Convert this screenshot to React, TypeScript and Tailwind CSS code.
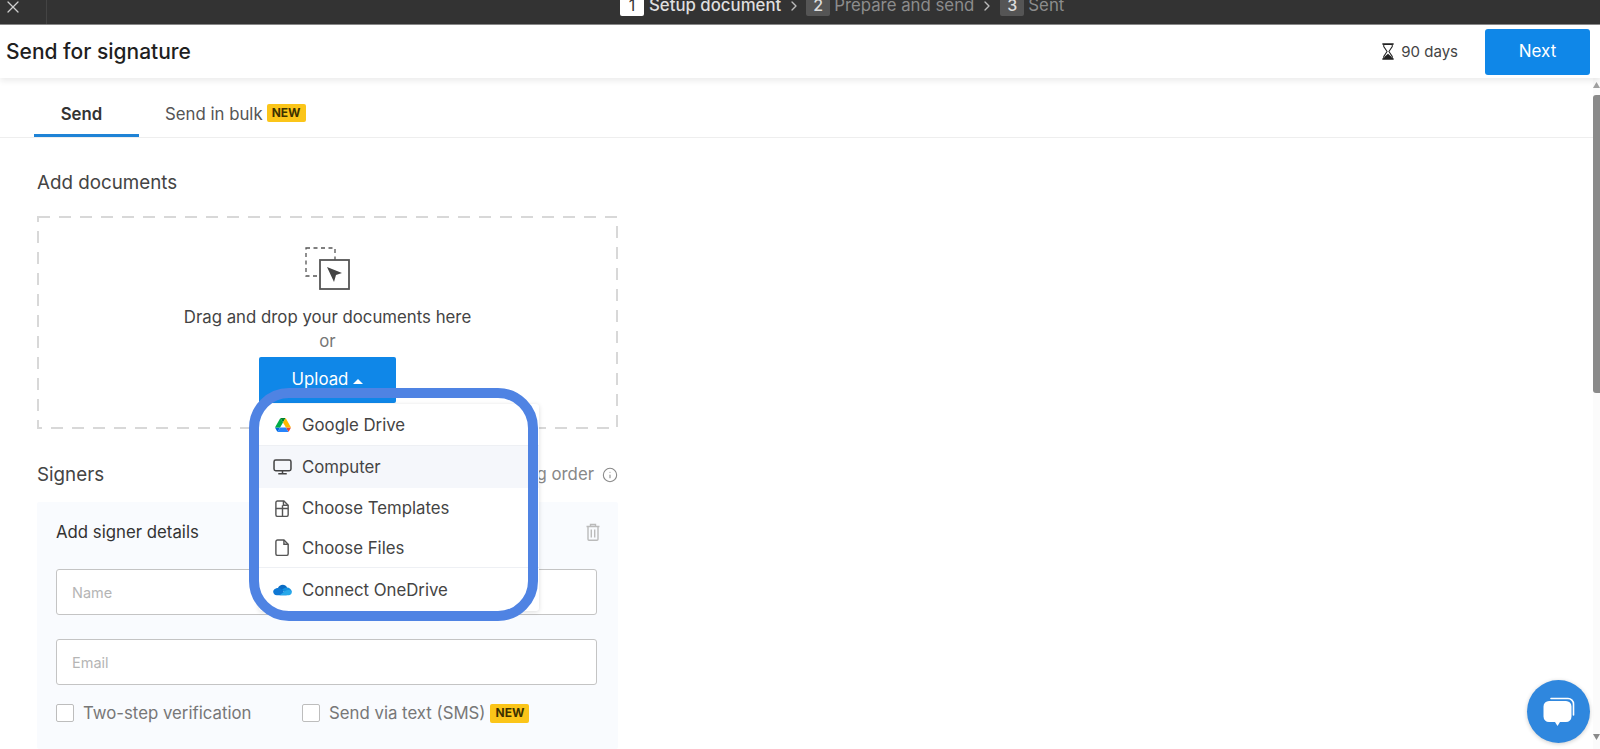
import React from "react";
import { ChevronRight, X, Info } from "lucide-react";

function NewBadge({ className }: { className: string }) {
  return (
    <span className={`inline-flex items-center justify-center rounded-[2px] bg-[#fbc519] text-[12px] font-bold text-[#3d3200] ${className}`}>
      NEW
    </span>
  );
}

function Step({ n, label, active }: { n: string; label: string; active?: boolean }) {
  return (
    <div className="flex items-center">
      <span
        className={
          active
            ? "flex h-[24px] w-[24px] items-center justify-center rounded-[2px] bg-white pt-[2px] text-[16px] text-[#333]"
            : "flex h-[24px] w-[24px] items-center justify-center rounded-[2px] bg-[#555] pt-[2px] text-[16px] font-medium text-[#ddd]"
        }
      >
        {n}
      </span>
      <span className={active ? "ml-[5px] mt-[3px] text-[16.8px] font-medium text-[#dedede]" : "ml-[4px] mt-[3px] text-[16.8px] text-[#8c8c8c]"}>{label}</span>
    </div>
  );
}

function DriveIcon() {
  return (
    <svg viewBox="0 0 87.3 78" className="h-[14px] w-[16px]">
      <path d="m6.6 66.85 3.85 6.65c.8 1.4 1.95 2.5 3.3 3.3l13.75-23.8h-27.5c0 1.55.4 3.1 1.2 4.5z" fill="#0066da" />
      <path d="m43.65 25-13.75-23.8c-1.35.8-2.5 1.9-3.3 3.3l-25.4 44a9.06 9.06 0 0 0 -1.2 4.5h27.5z" fill="#00ac47" />
      <path d="m73.55 76.8c1.35-.8 2.5-1.9 3.3-3.3l1.6-2.75 7.65-13.25c.8-1.4 1.2-2.95 1.2-4.5h-27.502l5.852 11.5z" fill="#ea4335" />
      <path d="m43.65 25 13.75-23.8c-1.35-.8-2.9-1.2-4.5-1.2h-18.5c-1.6 0-3.15.45-4.5 1.2z" fill="#00832d" />
      <path d="m59.8 53h-32.3l-13.75 23.8c1.35.8 2.9 1.2 4.5 1.2h50.8c1.6 0 3.15-.45 4.5-1.2z" fill="#2684fc" />
      <path d="m73.4 26.5-12.7-22c-.8-1.4-1.95-2.5-3.3-3.3l-13.75 23.8 16.15 28h27.45c0-1.55-.4-3.1-1.2-4.5z" fill="#ffba00" />
    </svg>
  );
}

function ComputerIcon() {
  return (
    <svg viewBox="0 0 20 17" className="h-[16px] w-[19px]" fill="none" stroke="#444" strokeWidth="1.6">
      <rect x="1" y="1" width="18" height="11.5" rx="1.8" />
      <path d="M10 12.5v3M5.5 15.8h9" />
    </svg>
  );
}

function TemplateIcon() {
  return (
    <svg viewBox="0 0 18 18" className="h-[17px] w-[17px]" fill="none" stroke="#555" strokeWidth="1.5">
      <path d="M3.5 1h7l4.500 4.500v10a1.800 1.800 0 0 1-1.800 1.800H3.800A1.800 1.800 0 0 1 2 15.500V2.800A1.800 1.800 0 0 1 3.500 1z" />
      <path d="M2 9h13M9 5.500v11.800M10 1v4.500h5" />
    </svg>
  );
}

function FileIcon() {
  return (
    <svg viewBox="0 0 18 18" className="h-[17px] w-[17px]" fill="none" stroke="#555" strokeWidth="1.5">
      <path d="M3.800 1h6.700l4.500 4.500v10a1.800 1.800 0 0 1-1.800 1.800H3.800A1.800 1.800 0 0 1 2 15.500V2.800A1.800 1.800 0 0 1 3.800 1z" />
      <path d="M10.500 1v4.500H15" />
    </svg>
  );
}

function OneDriveIcon() {
  return (
    <svg viewBox="0 0 20 12" className="h-[12px] w-[19px]">
      <path d="M5 4.500C6 1.800 8 .5 10.300.5c2 0 3.600 1 4.600 3L10 8 4 6z" fill="#0a6cc4" />
      <path d="M14.200 3.300c2.600-.3 5.200 1.600 5.600 4.300L14 10 9.500 5.800c1.200-1.400 2.800-2.400 4.700-2.500z" fill="#1490df" />
      <path d="M5.500 3.900c1.600 0 3 .7 4 1.900L14.500 11.500H4C1.800 11.500.2 10 .2 7.900c0-2.300 2.400-4 5.300-4z" fill="#0f78d4" />
      <path d="M19.800 7.500c.3 2.200-1.200 4-3.300 4H7l5.800-4.400c2-1.500 4.800-1.500 7 .4z" fill="#28a8ea" />
    </svg>
  );
}

function MenuRow({ icon, label, className }: { icon: React.ReactNode; label: string; className: string }) {
  return (
    <div className={`flex items-center pl-[14px] ${className}`}>
      <span className="flex w-[19px] justify-center">{icon}</span>
      <span className="ml-[10px] mt-[2px] text-[16.8px] text-[#444]">{label}</span>
    </div>
  );
}

export default function App() {
  return (
    <div className="relative flex h-[749px] w-full flex-col overflow-hidden bg-white font-['Inter',sans-serif]">
      {/* Top step bar, cut off at the window edge */}
      <div className="flex h-[25px] shrink-0 items-start overflow-hidden border-b border-[#8a8a8a] bg-[#333]">
        <div className="-mt-[3px] flex h-[30px] w-[47px] shrink-0 items-start border-r border-[#444] pl-[3px]">
          <X className="h-[20px] w-[20px] text-[#cfcfcf]" strokeWidth={1.5} />
        </div>
        <div className="-mt-[8px] ml-[573px] flex h-[24px] items-center">
          <Step n="1" label="Setup document" active />
          <ChevronRight className="ml-[5px] mt-[3px] h-[16px] w-[16px] text-[#bbb]" />
          <div className="ml-[4px]">
            <Step n="2" label="Prepare and send" />
          </div>
          <ChevronRight className="ml-[5px] mt-[3px] h-[16px] w-[16px] text-[#bbb]" />
          <div className="ml-[5px]">
            <Step n="3" label="Sent" />
          </div>
        </div>
      </div>

      {/* Header */}
      <div className="relative z-10 flex h-[53px] shrink-0 items-center justify-between bg-white pl-[6px] pr-[10px] shadow-[0_3px_6px_rgba(0,0,0,0.08)]">
        <h1 className="text-[21px] font-medium text-[#1f1f1f]">Send for signature</h1>
        <div className="flex items-center">
          <svg viewBox="0 0 14 18" className="h-[17px] w-[14px]">
            <path d="M1 1h12M1 17h12" stroke="#222" strokeWidth="1.6" />
            <path d="M2.500 1.500v2.300L6 9l-3.500 5.200v2.300h9v-2.300L8 9l3.500-5.200V1.500z" fill="none" stroke="#222" strokeWidth="1.100" />
            <path d="M3 16.500V14.800L7 11.500l4 3.300v1.700z" fill="#222" />
          </svg>
          <span className="ml-[6px] mt-[1px] text-[15px] text-[#444]">90 days</span>
          <button className="ml-[27px] flex h-[46px] w-[105px] items-center justify-center rounded-[3px] bg-[#0f87e8] pt-[1px] text-[17px] text-white">
            Next
          </button>
        </div>
      </div>

      <div className="flex min-h-0 flex-1">
        <main className="min-w-0 flex-1">
          {/* Tabs */}
          <div className="flex h-[60px] items-end border-b border-[#eeeeee] pl-[34px]">
            <div className="flex h-[38px] w-[105px] items-start justify-center border-b-[3px] border-[#1f83d6] pr-[10px] pt-[3px] text-[16.8px] font-semibold text-[#333]">
              Send
            </div>
            <div className="ml-[26px] flex h-[38px] items-start text-[16.8px] text-[#555]">
              <span className="mt-[3px]">Send in bulk</span>
              <NewBadge className="ml-[4px] mt-[5px] h-[18px] w-[39px]" />
            </div>
          </div>

          <div className="ml-[37px] w-[581px]">
            <h2 className="mt-[33px] text-[18.8px] leading-[24px] text-[#444]">Add documents</h2>

            {/* Drop zone */}
            <div className="relative mt-[21px] flex h-[213px] flex-col items-center pt-[31px]">
              <svg className="absolute inset-0" width="581" height="213" fill="none">
                <rect x="1" y="1" width="579" height="211" stroke="#d8d8d8" strokeWidth="2" strokeDasharray="12 9" />
              </svg>
              <svg viewBox="0 0 45 43" className="h-[43px] w-[45px]" fill="none">
                <rect x="1" y="1" width="29" height="28" stroke="#555" strokeWidth="1.300" strokeDasharray="4 3.500" />
                <rect x="15" y="13" width="29" height="29" fill="#fff" stroke="#555" strokeWidth="1.800" />
                <path d="M22 20l15 6-6 2-2 7z" fill="#444" />
              </svg>
              <p className="mt-[15px] text-[16.8px] leading-[24px] text-[#444]">Drag and drop your documents here</p>
              <p className="text-[16.8px] leading-[24px] text-[#777]">or</p>
              <button className="mt-[4px] flex h-[46px] w-[137px] items-center justify-center rounded-[2px] bg-[#0f87e8] text-[16.8px] text-white">
                Upload
                <svg viewBox="0 0 10 5" className="ml-[5px] mt-[2px] h-[5px] w-[10px]">
                  <path d="M5 0l5 5H0z" fill="#fff" />
                </svg>
              </button>
            </div>

            {/* Signers */}
            <div className="mt-[33px] flex h-[24px] items-center justify-between">
              <h2 className="mt-[3px] text-[18.8px] text-[#444]">Signers</h2>
              <div className="mt-[2px] flex items-center text-[16.8px] text-[#888]">
                Signing order
                <Info className="ml-[8px] h-[16px] w-[16px]" strokeWidth={1.6} />
              </div>
            </div>

            <div className="mt-[16px] rounded-[2px] bg-[#f9fbfe] pb-[27px] pl-[19px] pr-[21px] pt-[18px]">
              <div className="flex h-[24px] items-center justify-between">
                <span className="mt-[2px] text-[16.8px] text-[#333]">Add signer details</span>
                <svg viewBox="0 0 14 18" className="-mr-[3px] h-[18px] w-[14px]" fill="none" stroke="#bbbbbb" strokeWidth="1.400">
                  <path d="M.5 3.500h13M4.500 3.500V1.500h5v2M2 3.500v12.800a1 1 0 0 0 1 1h8a1 1 0 0 0 1-1V3.500" />
                  <path d="M5.300 6.500v8M8.700 6.500v8" />
                </svg>
              </div>
              <input
                placeholder="Name"
                className="mt-[25px] block h-[46px] w-full rounded-[3px] border border-[#c4c4c4] bg-white pl-[15px] text-[14.5px] outline-none placeholder:text-[#b5b5b5]"
              />
              <input
                placeholder="Email"
                className="mt-[24px] block h-[46px] w-full rounded-[3px] border border-[#c4c4c4] bg-white pl-[15px] text-[14.5px] outline-none placeholder:text-[#b5b5b5]"
              />
              <div className="mt-[19px] flex h-[18px] items-center">
                <span className="h-[18px] w-[18px] rounded-[2px] border border-[#bdbdbd] bg-white" />
                <span className="ml-[9px] mt-[2px] w-[219px] text-[16.8px] text-[#777]">Two-step verification</span>
                <span className="h-[18px] w-[18px] rounded-[2px] border border-[#bdbdbd] bg-white" />
                <span className="ml-[9px] mt-[2px] text-[16.8px] text-[#777]">Send via text (SMS)</span>
                <NewBadge className="ml-[5px] h-[19px] w-[39px]" />
              </div>
            </div>
          </div>
        </main>

        {/* Scrollbar */}
        <div className="flex w-[7px] shrink-0 flex-col justify-between bg-[#fbfbfb]">
          <div>
            <svg viewBox="0 0 7 6" className="mt-[4px] h-[6px] w-[7px]">
              <path d="M3.500 0L7 6H0z" fill="#a0a0a0" />
            </svg>
            <div className="mt-[7px] h-[298px] w-[7px] rounded-l-[3px] bg-[#8a8a8a]" />
          </div>
          <svg viewBox="0 0 7 6" className="mb-[9px] h-[6px] w-[7px]">
            <path d="M0 0h7L3.500 6z" fill="#8a8a8a" />
          </svg>
        </div>
      </div>

      {/* Upload dropdown, open over the form */}
      <div className="absolute left-[259px] top-[404px] z-20 flex h-[207px] w-[280px] flex-col rounded-[3px] bg-white shadow-[0_1px_5px_rgba(0,0,0,0.14)]">
        <MenuRow icon={<DriveIcon />} label="Google Drive" className="h-[42px] border-b border-[#eef0f4]" />
        <MenuRow icon={<ComputerIcon />} label="Computer" className="h-[42px] bg-[#f5f7fb]" />
        <MenuRow icon={<TemplateIcon />} label="Choose Templates" className="h-[40px]" />
        <MenuRow icon={<FileIcon />} label="Choose Files" className="h-[40px] border-b border-[#eef0f4]" />
        <MenuRow icon={<OneDriveIcon />} label="Connect OneDrive" className="h-[43px]" />
      </div>

      {/* Highlight ring drawn on top of the menu */}
      <div className="absolute left-[249px] top-[388px] z-30 h-[233px] w-[289px] rounded-[40px] border-[10px] border-[#4f83e3]" />

      {/* Chat launcher */}
      <div className="absolute left-[1527px] top-[680px] z-30 flex h-[63px] w-[63px] items-center justify-center rounded-full bg-[#2f87de] shadow-[0_1px_4px_rgba(0,0,0,0.2)]">
        <svg viewBox="0 0 34 34" className="h-[34px] w-[34px]">
          <path d="M9 3.500h17a5.500 5.500 0 0 1 5.500 5.500v11" fill="none" stroke="#fff" strokeWidth="1.600" strokeLinecap="round" />
          <path d="M7 6h17a5.500 5.500 0 0 1 5.500 5.500v10a5.500 5.500 0 0 1-5.500 5.500h-6l-2.500 4-2.500-4H7a5.500 5.500 0 0 1-5.500-5.500v-10A5.500 5.500 0 0 1 7 6z" fill="#fff" />
        </svg>
      </div>
    </div>
  );
}
